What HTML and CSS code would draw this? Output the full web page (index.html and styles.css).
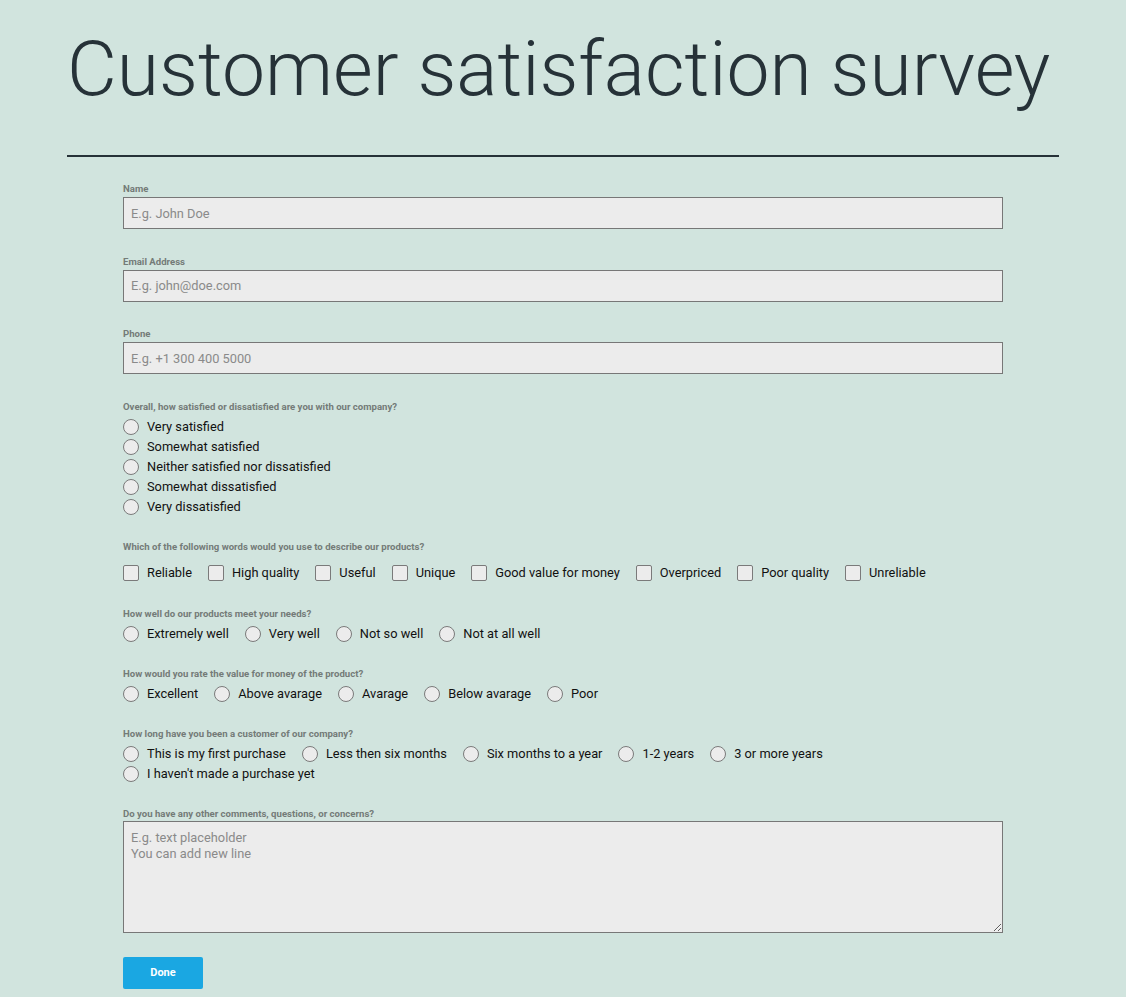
FILE: index.html
```html
<!DOCTYPE html>
<html lang="en">
<head>
  <meta charset="UTF-8">
  <meta name="viewport" content="width=device-width, initial-scale=1.0">
  <title>Customer satisfaction survey</title>
  <link rel="stylesheet" href="styles.css">
</head>
<body>
  <div class="page">
    <header class="header">
      <h1 class="title">Customer satisfaction survey</h1>
    </header>

    <form class="survey">
      <div class="field">
        <label class="field-label" for="name">Name</label>
        <input class="text-input" type="text" id="name" name="name" placeholder="E.g. John Doe">
      </div>
      <div class="field">
        <label class="field-label" for="email">Email Address</label>
        <input class="text-input" type="email" id="email" name="email" placeholder="E.g. john@doe.com">
      </div>
      <div class="field">
        <label class="field-label" for="phone">Phone</label>
        <input class="text-input" type="text" id="phone" name="phone" placeholder="E.g. +1 300 400 5000">
      </div>

      <div class="group">
        <div class="field-label">Overall, how satisfied or dissatisfied are you with our company?</div>
        <div class="options options-stacked">
          <label class="option"><input type="radio" name="overall"> Very satisfied</label>
          <label class="option"><input type="radio" name="overall"> Somewhat satisfied</label>
          <label class="option"><input type="radio" name="overall"> Neither satisfied nor dissatisfied</label>
          <label class="option"><input type="radio" name="overall"> Somewhat dissatisfied</label>
          <label class="option"><input type="radio" name="overall"> Very dissatisfied</label>
        </div>
      </div>

      <div class="group group-checks">
        <div class="field-label field-label-wide">Which of the following words would you use to describe our products?</div>
        <div class="options">
          <label class="option"><input type="checkbox" name="words"> Reliable</label>
          <label class="option"><input type="checkbox" name="words"> High quality</label>
          <label class="option"><input type="checkbox" name="words"> Useful</label>
          <label class="option"><input type="checkbox" name="words"> Unique</label>
          <label class="option"><input type="checkbox" name="words"> Good value for money</label>
          <label class="option"><input type="checkbox" name="words"> Overpriced</label>
          <label class="option"><input type="checkbox" name="words"> Poor quality</label>
          <label class="option"><input type="checkbox" name="words"> Unreliable</label>
        </div>
      </div>

      <div class="group">
        <div class="field-label">How well do our products meet your needs?</div>
        <div class="options">
          <label class="option"><input type="radio" name="needs"> Extremely well</label>
          <label class="option"><input type="radio" name="needs"> Very well</label>
          <label class="option"><input type="radio" name="needs"> Not so well</label>
          <label class="option"><input type="radio" name="needs"> Not at all well</label>
        </div>
      </div>

      <div class="group">
        <div class="field-label">How would you rate the value for money of the product?</div>
        <div class="options">
          <label class="option"><input type="radio" name="value"> Excellent</label>
          <label class="option"><input type="radio" name="value"> Above avarage</label>
          <label class="option"><input type="radio" name="value"> Avarage</label>
          <label class="option"><input type="radio" name="value"> Below avarage</label>
          <label class="option"><input type="radio" name="value"> Poor</label>
        </div>
      </div>

      <div class="group">
        <div class="field-label">How long have you been a customer of our company?</div>
        <div class="options">
          <label class="option"><input type="radio" name="howlong"> This is my first purchase</label>
          <label class="option"><input type="radio" name="howlong"> Less then six months</label>
          <label class="option"><input type="radio" name="howlong"> Six months to a year</label>
          <label class="option"><input type="radio" name="howlong"> 1-2 years</label>
          <label class="option"><input type="radio" name="howlong"> 3 or more years</label>
          <label class="option"><input type="radio" name="howlong"> I haven't made a purchase yet</label>
        </div>
      </div>

      <div class="group">
        <label class="field-label field-label-tight" for="comments">Do you have any other comments, questions, or concerns?</label>
        <textarea class="text-area" id="comments" name="comments" placeholder="E.g. text placeholder&#10;You can add new line"></textarea>
      </div>

      <button class="btn-done" type="submit">Done</button>
    </form>
  </div>
</body>
</html>
```

FILE: styles.css
```css
body {
  margin: 0;
  background-color: #d1e4de;
  font-family: Roboto, "Liberation Sans", sans-serif;
  color: #1a1a1a;
}

.page {
  width: 992px;
  margin: 0 auto;
}

.header {
  padding-top: 29px;
  padding-bottom: 46px;
  border-bottom: 2px solid #263238;
}

.title {
  margin: 0;
  font-size: 4.8rem;
  line-height: 80px;
  font-weight: 300;
  color: #263238;
  white-space: nowrap;
}

.survey {
  padding: 26px 56px 8px;
}

.field {
  margin-bottom: 26.5px;
}

.field-label {
  display: block;
  font-size: 0.6rem;
  line-height: 11px;
  font-weight: 700;
  color: #747b78;
  margin-bottom: 3px;
}

.text-input,
.text-area {
  display: block;
  width: 100%;
  box-sizing: border-box;
  border: 1px solid #777;
  border-radius: 0;
  background-color: #ececec;
  font-family: Roboto, "Liberation Sans", sans-serif;
  font-size: 0.8rem;
  color: #222;
  margin: 0;
}

.text-input {
  height: 32px;
  padding: 0 7px;
}

.text-area {
  height: 112px;
  padding: 8px 7px;
  line-height: 16px;
  resize: vertical;
}

.text-input::placeholder,
.text-area::placeholder {
  color: #8a8a8a;
}

.group {
  margin-bottom: 24px;
}

.group-checks {
  margin-bottom: 25px;
}

.group .field-label {
  margin-bottom: 5px;
}

.group .field-label-wide {
  margin-bottom: 11px;
}

.group .field-label-tight {
  margin-bottom: 2px;
}

.options {
  display: flex;
  flex-wrap: wrap;
  column-gap: 16px;
}

.options-stacked {
  flex-direction: column;
}

.option {
  display: flex;
  align-items: center;
  gap: 8px;
  height: 20px;
  font-size: 0.8rem;
  color: #111;
}

.option input {
  appearance: none;
  -webkit-appearance: none;
  width: 16px;
  height: 16px;
  margin: 0;
  border: 1px solid #7a7a7a;
  background-color: #ececec;
  box-sizing: border-box;
}

.option input[type="radio"] {
  border-radius: 50%;
}

.option input[type="checkbox"] {
  border-radius: 2px;
}

.btn-done {
  width: 80px;
  height: 32px;
  border: none;
  border-radius: 2px;
  background-color: #1aa7e2;
  color: #fff;
  font-family: Roboto, "Liberation Sans", sans-serif;
  font-size: 11px;
  font-weight: 700;
  cursor: pointer;
}
```
